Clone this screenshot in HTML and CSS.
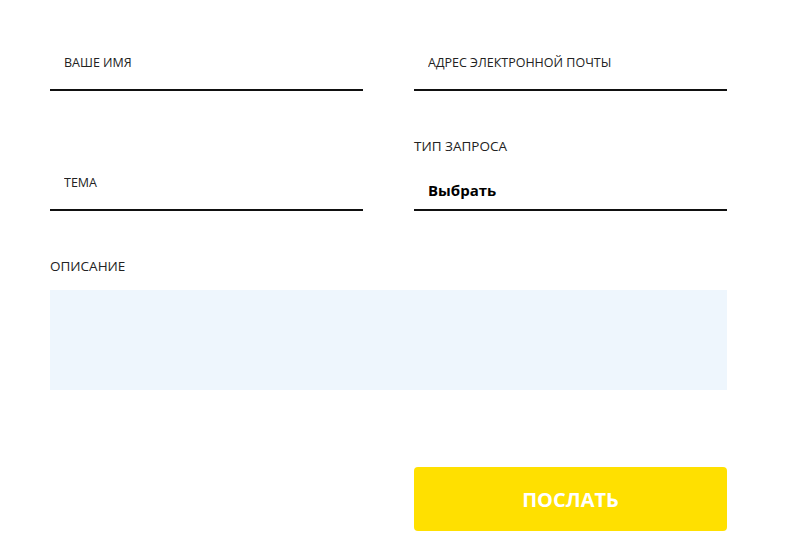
FILE: index.html
```html
<!DOCTYPE html>
<html lang="ru">
<head>
    <meta charset="UTF-8">
    <meta name="viewport" content="width=device-width, initial-scale=1.0">
    <title>Обратная связь</title>
    <link rel="stylesheet" href="styles.css">
</head>
<body>
    <form class="contact-form" onsubmit="return false">
        <div class="form-group">
            <input type="text" class="field" placeholder="Ваше имя">
        </div>
        <div class="form-group">
            <input type="email" class="field" placeholder="Адрес электронной почты">
        </div>
        <div class="form-group">
            <input type="text" class="field" placeholder="Тема">
        </div>
        <div class="form-group">
            <label class="label" for="requestType">Тип запроса</label>
            <select id="requestType" class="select">
                <option>Выбрать</option>
            </select>
        </div>
        <div class="form-group wide">
            <label class="label" for="description">Описание</label>
            <textarea id="description" class="textarea"></textarea>
        </div>
        <div class="form-group submit">
            <button type="submit" class="send-btn">Послать</button>
        </div>
    </form>
</body>
</html>
```

FILE: styles.css
```css
body {
    margin: 0;
    font-family: 'Open Sans', 'Liberation Sans', sans-serif;
    background-color: #fff;
    color: #222;
}

.contact-form {
    display: grid;
    grid-template-columns: 1fr 1fr;
    column-gap: 51px;
    row-gap: 46px;
    align-items: end;
    width: 677px;
    padding: 54px 0 0 50px;
}

.form-group {
    display: flex;
    flex-direction: column;
}

.wide {
    grid-column: 1 / 3;
}

.submit {
    grid-column: 2;
    margin-top: 31px;
}

.field {
    box-sizing: border-box;
    height: 37px;
    padding: 0 14px 18px;
    border: none;
    border-bottom: 2px solid #111;
    font-family: inherit;
    font-size: 12.5px;
    line-height: 17px;
    text-transform: uppercase;
    color: #222;
    outline: none;
}

.field::placeholder {
    color: #222;
    opacity: 1;
}

.label {
    font-size: 13.5px;
    line-height: 19px;
    text-transform: uppercase;
}

.select {
    box-sizing: border-box;
    height: 31px;
    margin-top: 24px;
    padding: 0 14px 10px;
    border: none;
    border-bottom: 2px solid #111;
    border-radius: 0;
    background: transparent;
    appearance: none;
    font-family: inherit;
    font-size: 15px;
    font-weight: 700;
    color: #000;
    outline: none;
}

.textarea {
    display: block;
    box-sizing: border-box;
    height: 100px;
    margin-top: 14px;
    border: none;
    background-color: #eef6fd;
    resize: none;
    outline: none;
}

.send-btn {
    height: 64px;
    border: none;
    border-radius: 4px;
    background-color: #ffe000;
    color: #fff;
    font-family: inherit;
    font-size: 20px;
    font-weight: 700;
    text-transform: uppercase;
    cursor: pointer;
}
```
